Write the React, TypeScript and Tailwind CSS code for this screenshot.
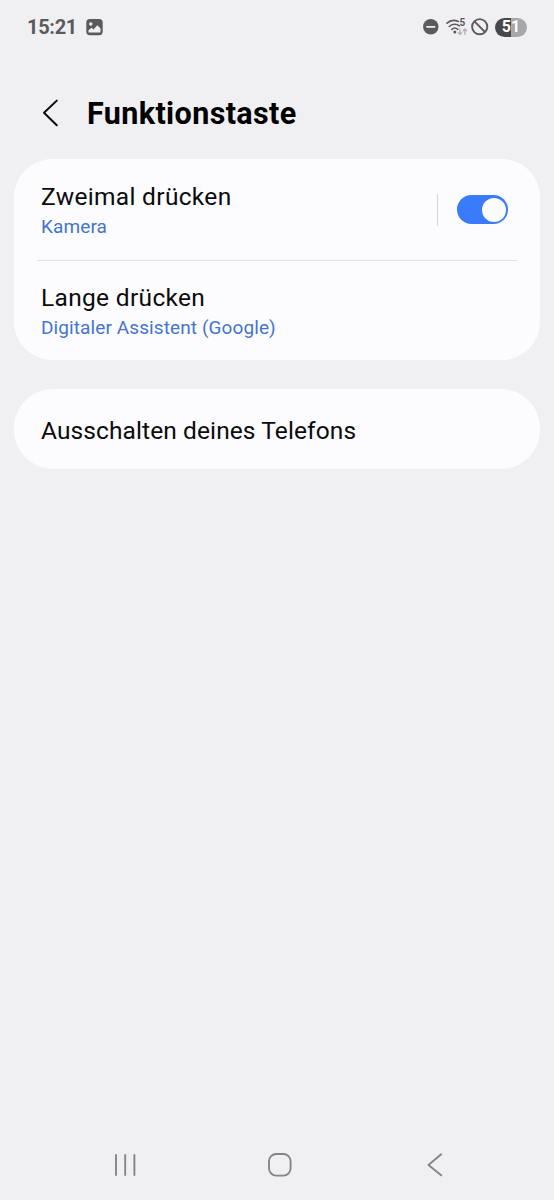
import React from "react";

function StatusBar() {
  return (
    <header className="flex h-[54px] items-center justify-between pl-[27px] pr-[27px] text-[#5a5a5c]">
      <div className="flex items-center">
        <span className="w-[49px] whitespace-nowrap text-[20px] leading-6 font-bold tracking-[-0.3px]">15:21</span>
        <svg className="ml-[10px]" width="17" height="17" viewBox="0 0 17 17">
          <rect x="0.3" y="0" width="16.4" height="16.2" rx="3.6" fill="currentColor" />
          <circle cx="4.8" cy="5" r="1.7" fill="#f0f0f2" />
          <path d="M2.5 13.4v-2.2l3-2.5 2 1.8 3.8-4.3 3.2 3.4v3.8z" fill="#f0f0f2" />
        </svg>
      </div>
      <div className="flex items-center">
        <svg width="16" height="16" viewBox="0 0 16 16">
          <circle cx="7.8" cy="7.8" r="7.7" fill="currentColor" />
          <path d="M4 7.8h7.6" stroke="#f0f0f2" strokeWidth="1.8" strokeLinecap="round" />
        </svg>
        <svg className="ml-[7px]" width="22" height="18" viewBox="0 0 22 18" fill="none" stroke="currentColor" strokeLinecap="round">
          <path d="M1 5.2C4 2.4 8.5 1.8 12.4 3.5" strokeWidth="1.6" />
          <path d="M3.3 8.5c2.7-2.6 7-3 10-.7" strokeWidth="1.6" />
          <path d="M5.9 11.4c1.7-1.6 4.2-1.6 5.9-.1" strokeWidth="1.6" />
          <circle cx="8.8" cy="14" r="1.5" fill="currentColor" stroke="none" />
          <text x="13.6" y="8.4" fontSize="10" fontWeight="700" fill="currentColor" stroke="none">5</text>
          <path d="M14 11v5.4m-1.7-1.7 1.7 1.7 1.7-1.7M18.9 16.4V11m-1.7 1.7 1.7-1.7 1.7 1.7" stroke="#b0b0b2" strokeWidth="1.3" />
        </svg>
        <svg className="ml-[3px]" width="18" height="18" viewBox="0 0 18 18" fill="none" stroke="currentColor" strokeWidth="1.9">
          <circle cx="8.7" cy="8.7" r="7.6" />
          <path d="M3.4 3.4l10.6 10.6" />
        </svg>
        <div className="ml-[6px] flex h-[19px] w-8 items-center justify-center rounded-full bg-linear-to-r from-[#484848] from-51% to-[#a7a7a9] to-51% text-[16px] font-bold leading-none text-white">
          51
        </div>
      </div>
    </header>
  );
}

function Toggle() {
  return (
    <button type="button" role="switch" aria-checked="true" aria-label="Zweimal drücken" className="flex h-[29px] w-[51px] items-center justify-end rounded-full bg-[#397bfb] pr-[2px]">
      <span className="size-6 rounded-full bg-[#fcfcfe]" />
    </button>
  );
}

type RowTextProps = {
  title: string;
  value: string;
};

function RowText({ title, value }: RowTextProps) {
  return (
    <div className="flex flex-col whitespace-nowrap">
      <span className="text-[24.5px] leading-[30px] tracking-[0.32px] text-[#0b0b0c]">{title}</span>
      <span className="text-[19px] leading-[30px] tracking-[0.1px] text-[#4474d0]">{value}</span>
    </div>
  );
}

function NavigationBar() {
  return (
    <nav className="flex h-[70px] items-center text-[#858587]">
      <svg className="ml-[113px]" width="24" height="24" viewBox="0 0 24 24" stroke="currentColor" strokeWidth="1.9" strokeLinecap="round">
        <path d="M3 2v20M12.2 2v20M21.4 2v20" />
      </svg>
      <svg className="ml-[131px]" width="24" height="24" viewBox="0 0 24 24" fill="none" stroke="currentColor" strokeWidth="1.9">
        <rect x="1" y="1" width="21.6" height="21.6" rx="7.3" />
      </svg>
      <svg className="ml-[134px]" width="18" height="24" viewBox="0 0 18 24" fill="none" stroke="currentColor" strokeWidth="1.9" strokeLinecap="round" strokeLinejoin="round">
        <path d="M15.2 1.3L2.5 12l12.7 10.3" />
      </svg>
    </nav>
  );
}

export default function App() {
  return (
    <div className="flex h-[1200px] w-[554px] flex-col bg-[#f0f0f2] font-['Roboto',sans-serif]">
      <StatusBar />
      <div className="flex h-[105px] items-center pl-[42px] pt-[13px]">
        <svg width="18" height="28" viewBox="0 0 18 28" fill="none" stroke="#0b0b0c" strokeWidth="2" strokeLinecap="round" strokeLinejoin="round">
          <path d="M14.8 1.6L2 13.8 14.8 26.2" />
        </svg>
        <h1 className="ml-[27px] whitespace-nowrap pt-px text-[30.5px] font-bold leading-9 tracking-[0.38px] text-black">Funktionstaste</h1>
      </div>
      <main className="flex flex-1 flex-col gap-[29px] px-[14px]">
        <section className="flex h-[201px] flex-col rounded-[38px] bg-[#fcfcfe] px-[23px]">
          <div className="flex h-[101px] items-center justify-between pl-[4px] pr-[9px]">
            <div className="pt-[5px]">
              <RowText title="Zweimal drücken" value="Kamera" />
            </div>
            <div className="flex items-center">
              <div className="mr-[19px] h-8 w-px bg-[#d8d8da]" />
              <Toggle />
            </div>
          </div>
          <div className="h-px shrink-0 bg-[#e3e3e5]" />
          <div className="flex h-[99px] items-center pl-[4px] pt-[4px]">
            <RowText title="Lange drücken" value="Digitaler Assistent (Google)" />
          </div>
        </section>
        <section className="flex h-[80px] items-center rounded-[39px] bg-[#fcfcfe] pl-[27px] pt-[4px]">
          <span className="whitespace-nowrap text-[24.5px] leading-[30px] tracking-[0.1px] text-[#0b0b0c]">Ausschalten deines Telefons</span>
        </section>
      </main>
      <NavigationBar />
    </div>
  );
}
